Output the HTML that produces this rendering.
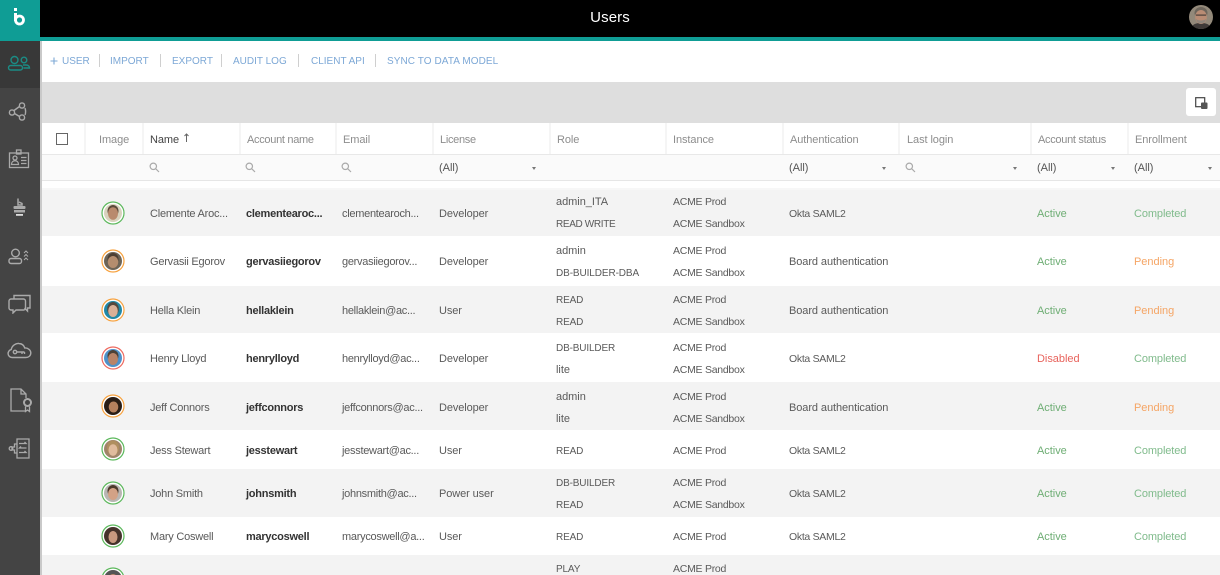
<!DOCTYPE html>
<html><head><meta charset="utf-8"><style>
html,body{margin:0;padding:0;width:1220px;height:575px;overflow:hidden;background:#fff}
body{position:relative;font-family:"Liberation Sans",sans-serif;font-size:11px;color:#5a5a5a;letter-spacing:-.03px}
.a,.t{position:absolute}
.t{white-space:nowrap;line-height:14px;height:14px}
.n{left:150px;letter-spacing:-.22px}
.b{left:246px;font-weight:bold;color:#333;letter-spacing:-.25px}
.e{left:342px;letter-spacing:-.28px}
.l{left:439px;letter-spacing:-.1px}
.k{left:556px;font-size:10px;letter-spacing:-.15px;transform:translateY(1px)}
.w{left:556px}
.i{left:673px;font-size:10.5px;letter-spacing:-.26px}
.u{left:789px;letter-spacing:-.08px}
.q{left:789px;font-size:10.5px;letter-spacing:-.3px}
.g{left:1037px;color:#6fae75}.c{left:1134px;color:#80bb8c;letter-spacing:-.1px}.o{left:1134px;color:#f5a565}.r{left:1037px;color:#e8635c}
.h{color:#8d8d8d;top:133px;letter-spacing:-.08px}
.m{color:#7da8d6;top:55px;font-size:10px;letter-spacing:0}
.s{position:absolute;top:54px;width:1px;height:13px;background:#cfcfcf}
.d{position:absolute;top:123px;width:2px;height:31px;background:#f5f5f5}
.av{position:absolute;left:101px;width:24px;height:24px}
.caret{position:absolute;top:167px;width:0;height:0;border-left:2.5px solid transparent;border-right:2.5px solid transparent;border-top:3px solid #777}
.sv{position:absolute;top:162px}
.f{color:#555;top:161px}
#rows{position:absolute;left:0;top:1px;width:1220px;height:574px}
</style></head><body>
<!-- rows -->
<div class="a" style="left:40px;top:190px;width:1180px;height:46px;background:#f3f3f3"></div>
<div class="a" style="left:40px;top:286px;width:1180px;height:47px;background:#f3f3f3"></div>
<div class="a" style="left:40px;top:382px;width:1180px;height:48px;background:#f3f3f3"></div>
<div class="a" style="left:40px;top:469px;width:1180px;height:48px;background:#f3f3f3"></div>
<div class="a" style="left:40px;top:555px;width:1180px;height:20px;background:#f3f3f3"></div>
<!-- top -->
<div class="a" style="left:0;top:0;width:1220px;height:37px;background:#000"></div>
<div class="a" style="left:0;top:37px;width:1220px;height:4px;background:#0f9d95"></div>
<div class="a" style="left:0;top:0;width:40px;height:41px;background:#0f9d95"></div>
<svg class="a" style="left:12px;top:7px" width="16" height="20" viewBox="0 0 16 20"><rect x="2" y="1" width="3" height="3" fill="#fff"/><path d="M3.500 6v8" stroke="#fff" stroke-width="3"/><circle cx="7.500" cy="13" r="4" fill="none" stroke="#fff" stroke-width="2.800"/></svg>
<div class="t" style="left:0;top:8px;width:1220px;height:20px;line-height:20px;text-align:center;color:#fff;font-size:15px;letter-spacing:.1px">Users</div>
<svg class="a" style="left:1189px;top:5px" width="24" height="24" viewBox="0 0 24 24"><defs><clipPath id="ci"><circle cx="12" cy="12" r="12"/></clipPath></defs><g clip-path="url(#ci)"><rect width="24" height="24" fill="#93897a"/><path d="M2 24c1-5 5-6 10-6s9 1 10 6z" fill="#3f3a38"/><ellipse cx="12" cy="8" rx="6.500" ry="6" fill="#6e665c"/><ellipse cx="12" cy="12" rx="5.800" ry="7" fill="#b98c74"/><path d="M7 14c1 6 9 6 10 0-2 2-8 2-10 0z" fill="#8f867c"/><rect x="7" y="9.500" width="10" height="1.200" fill="#4a403a"/></g></svg>
<!-- sidebar -->
<div class="a" style="left:0;top:41px;width:40px;height:534px;background:#444"></div>
<div class="a" style="left:0;top:41px;width:40px;height:47px;background:#383838"></div>
<div class="a" style="left:40px;top:41px;width:2px;height:534px;background:#c9c9c9"></div>
<svg class="a" style="left:7px;top:55px" width="24" height="18" viewBox="0 0 24 18" fill="none" stroke="#1b8c85" stroke-width="1.400"><circle cx="7.500" cy="5" r="3.500"/><circle cx="17" cy="5" r="2.800"/><rect x="1.500" y="10.500" width="14" height="4.500" rx="2.200"/><path d="M16 10h3c2.500 0 3.500 1.500 3.500 3h-6"/></svg>
<svg class="a" style="left:8px;top:101px" width="20" height="22" viewBox="0 0 20 22" fill="none" stroke="#aaa" stroke-width="1.400"><circle cx="14" cy="4.500" r="2.600"/><circle cx="4" cy="11.500" r="2.600"/><circle cx="14" cy="16.500" r="2.600"/><path d="M11.500 5.500L6 9.500M6.500 12.500l5 3M17 7c.8 2.500.8 5 0 7"/></svg>
<svg class="a" style="left:8px;top:149px" width="22" height="20" viewBox="0 0 22 20" fill="none" stroke="#aaa" stroke-width="1.300"><rect x="1.500" y="4" width="19" height="14.500"/><rect x="8.500" y="1" width="4.500" height="4"/><circle cx="7" cy="9" r="2"/><path d="M3.500 15.500c0-5 7-5 7 0zM13 8.500h5.500M13 11.500h5.500M13 14.500h5.500"/></svg>
<svg class="a" style="left:12px;top:197px" width="15" height="22" viewBox="0 0 15 22"><path d="M6 1.500v6.500h4V6.500L7 5" fill="none" stroke="#aaa" stroke-width="1.500"/><rect x="1.500" y="9" width="12" height="3" rx="1" fill="#aaa"/><rect x="2" y="13" width="11" height="2.500" fill="#aaa"/><rect x="4" y="17" width="7" height="1.800" fill="#ddd"/></svg>
<svg class="a" style="left:8px;top:248px" width="23" height="18" viewBox="0 0 23 18" fill="none" stroke="#aaa" stroke-width="1.400"><circle cx="7.500" cy="5" r="3.800"/><rect x="1" y="10.500" width="12.500" height="5" rx="2"/><path d="M16 5l2-2 2 2M16 8.500l2-2 2 2M16 12l2-2 2 2" stroke-width="1"/></svg>
<svg class="a" style="left:8px;top:293px" width="23" height="21" viewBox="0 0 23 21" fill="none" stroke="#aaa" stroke-width="1.400"><path d="M6 6V2.500h16v12.500h-2.500v3l-3-3"/><path d="M3 6h12.500a2 2 0 0 1 2 2v7a2 2 0 0 1-2 2H8l-3 3v-3H3a2 2 0 0 1-2-2V8a2 2 0 0 1 2-2z"/></svg>
<svg class="a" style="left:7px;top:342px" width="25" height="17" viewBox="0 0 25 17" fill="none" stroke="#aaa" stroke-width="1.400"><path d="M5 15.500a4 4 0 0 1-.8-7.900C5 3.500 9 1 12 1.500c3 .2 5 2 5.800 4.500 3-.2 6 2 6 5s-2.500 4.500-5 4.500z"/><circle cx="8" cy="10" r="1.700"/><path d="M10 10h7.500M15 10v2M17.500 10v2"/></svg>
<svg class="a" style="left:10px;top:388px" width="23" height="25" viewBox="0 0 23 25" fill="none" stroke="#aaa" stroke-width="1.300"><path d="M15 23H1V1h10l5 5v4M11 1v5h5"/><circle cx="17.500" cy="14.500" r="3.500" stroke-width="2"/><path d="M15.500 18.500v5l2-1.500 2 1.500v-5" stroke-width="1.300"/></svg>
<svg class="a" style="left:8px;top:437px" width="22" height="23" viewBox="0 0 22 23" fill="none" stroke="#aaa" stroke-width="1.300"><path d="M9 2h12v19H9zM9 7H6.500v3H4v3h2.500v3H9"/><circle cx="3" cy="11.500" r="1.800"/><path d="M11 6.500h7l-1.500-1.500M18.500 11h-7l1.500-1.500M11 15.500h7L16.500 14"/></svg>
<!-- toolbar -->
<svg class="a" style="left:50px;top:57px" width="8" height="8" viewBox="0 0 8 8"><path d="M4 .5v7M.5 4h7" stroke="#7da8d6" stroke-width="1.100"/></svg>
<div class="t m" style="left:62px">USER</div><div class="s" style="left:99px"></div>
<div class="t m" style="left:110px">IMPORT</div><div class="s" style="left:160px"></div>
<div class="t m" style="left:172px">EXPORT</div><div class="s" style="left:221px"></div>
<div class="t m" style="left:233px">AUDIT LOG</div><div class="s" style="left:298px"></div>
<div class="t m" style="left:311px">CLIENT API</div><div class="s" style="left:375px"></div>
<div class="t m" style="left:387px;letter-spacing:.08px">SYNC TO DATA MODEL</div>
<!-- grey band -->
<div class="a" style="left:42px;top:82px;width:1178px;height:41px;background:#dedede"></div>
<div class="a" style="left:1186px;top:88px;width:30px;height:28px;background:#fff;border-radius:3px"></div>
<svg class="a" style="left:1195px;top:97px" width="13" height="13" viewBox="0 0 13 13"><rect x=".7" y=".7" width="9" height="9" fill="none" stroke="#444" stroke-width="1.200"/><rect x="6" y="5.500" width="6.500" height="6.500" rx="1" fill="#555"/></svg>
<!-- header -->
<div class="a" style="left:42px;top:123px;width:1178px;height:31px;background:#fff"></div>
<div class="a" style="left:42px;top:154px;width:1178px;height:26px;background:#fafafa"></div>
<div class="a" style="left:42px;top:154px;width:1178px;height:1px;background:#e8e8e8"></div>
<div class="a" style="left:42px;top:180px;width:1178px;height:1px;background:#e6e6e6"></div>
<div class="a" style="left:42px;top:188px;width:1178px;height:2px;background:#f7f7f7"></div>
<div class="d" style="left:84px"></div><div class="d" style="left:142px"></div><div class="d" style="left:239px"></div><div class="d" style="left:335px"></div><div class="d" style="left:432px"></div><div class="d" style="left:549px"></div><div class="d" style="left:665px"></div><div class="d" style="left:782px"></div><div class="d" style="left:898px"></div><div class="d" style="left:1030px"></div><div class="d" style="left:1127px"></div>
<div class="a" style="left:56px;top:133px;width:10px;height:10px;border:1.500px solid #666;background:#fff"></div>
<div class="t h" style="left:99px">Image</div>
<div class="t h" style="left:150px;color:#444">Name</div>
<svg class="a" style="left:183px;top:133px" width="7" height="9" viewBox="0 0 7 9"><path d="M3.500 9V1M1.500 3L3.500 1l2 2" fill="none" stroke="#666"/></svg>
<div class="t h" style="left:247px;letter-spacing:-.3px">Account name</div>
<div class="t h" style="left:343px">Email</div>
<div class="t h" style="left:440px;letter-spacing:-.3px">License</div>
<div class="t h" style="left:557px">Role</div>
<div class="t h" style="left:673px">Instance</div>
<div class="t h" style="left:790px">Authentication</div>
<div class="t h" style="left:907px">Last login</div>
<div class="t h" style="left:1038px;letter-spacing:-.3px">Account status</div>
<div class="t h" style="left:1135px">Enrollment</div>
<!-- filters -->
<svg class="sv" style="left:149px" width="11" height="11" viewBox="0 0 11 11" fill="none" stroke="#aaa" stroke-width="1.200"><circle cx="4.300" cy="4.300" r="3.200"/><path d="M6.800 6.800L10 10"/></svg>
<svg class="sv" style="left:245px" width="11" height="11" viewBox="0 0 11 11" fill="none" stroke="#aaa" stroke-width="1.200"><circle cx="4.300" cy="4.300" r="3.200"/><path d="M6.800 6.800L10 10"/></svg>
<svg class="sv" style="left:341px" width="11" height="11" viewBox="0 0 11 11" fill="none" stroke="#aaa" stroke-width="1.200"><circle cx="4.300" cy="4.300" r="3.200"/><path d="M6.800 6.800L10 10"/></svg>
<svg class="sv" style="left:905px" width="11" height="11" viewBox="0 0 11 11" fill="none" stroke="#aaa" stroke-width="1.200"><circle cx="4.300" cy="4.300" r="3.200"/><path d="M6.800 6.800L10 10"/></svg>
<div class="t f" style="left:439px">(All)</div><div class="caret" style="left:532px"></div>
<div class="t f" style="left:789px">(All)</div><div class="caret" style="left:882px"></div>
<div class="caret" style="left:1013px"></div>
<div class="t f" style="left:1037px">(All)</div><div class="caret" style="left:1111px"></div>
<div class="t f" style="left:1134px">(All)</div><div class="caret" style="left:1208px"></div>
<!-- avatars -->
<svg class="av" style="top:201px" viewBox="0 0 24 24"><circle cx="12" cy="12" r="11" fill="#fff" stroke="#5cb85c" stroke-width="1.200"/><circle cx="12" cy="12" r="9" fill="#d8d2bd"/><ellipse cx="12" cy="10" rx="5.500" ry="6" fill="#5a4a3a"/><ellipse cx="12" cy="12.500" rx="5" ry="6.300" fill="#b98a6d"/></svg>
<svg class="av" style="top:249px" viewBox="0 0 24 24"><circle cx="12" cy="12" r="11" fill="#fff" stroke="#f7a23f" stroke-width="1.200"/><circle cx="12" cy="12" r="9" fill="#6d6456"/><ellipse cx="12" cy="10" rx="5.500" ry="6" fill="#4c3f33"/><ellipse cx="12" cy="13" rx="5.200" ry="6" fill="#b48d6e"/></svg>
<svg class="av" style="top:298px" viewBox="0 0 24 24"><circle cx="12" cy="12" r="11" fill="#fff" stroke="#f7a23f" stroke-width="1.200"/><circle cx="12" cy="12" r="9" fill="#2088a6"/><ellipse cx="12" cy="11" rx="5.800" ry="7" fill="#55483d"/><ellipse cx="12" cy="13" rx="4.800" ry="6" fill="#d9b097"/></svg>
<svg class="av" style="top:346px" viewBox="0 0 24 24"><circle cx="12" cy="12" r="11" fill="#fff" stroke="#ee6a60" stroke-width="1.200"/><circle cx="12" cy="12" r="9" fill="#4f91c9"/><ellipse cx="12" cy="10" rx="5.500" ry="6" fill="#4d4238"/><ellipse cx="12" cy="13" rx="5" ry="6" fill="#b98468"/></svg>
<svg class="av" style="top:394px" viewBox="0 0 24 24"><circle cx="12" cy="12" r="11" fill="#fff" stroke="#f7a23f" stroke-width="1.200"/><circle cx="12" cy="12" r="9" fill="#2a1d15"/><ellipse cx="12.500" cy="13" rx="4.800" ry="5.500" fill="#b5805d"/></svg>
<svg class="av" style="top:437px" viewBox="0 0 24 24"><circle cx="12" cy="12" r="11" fill="#fff" stroke="#5cb85c" stroke-width="1.200"/><circle cx="12" cy="12" r="9" fill="#a0846a"/><ellipse cx="12" cy="11" rx="6" ry="7.500" fill="#b08f5f"/><ellipse cx="12" cy="13" rx="4.500" ry="5.800" fill="#e0bb9d"/></svg>
<svg class="av" style="top:481px" viewBox="0 0 24 24"><circle cx="12" cy="12" r="11" fill="#fff" stroke="#5cb85c" stroke-width="1.200"/><circle cx="12" cy="12" r="9" fill="#b8b6b2"/><ellipse cx="12" cy="10" rx="5.500" ry="6" fill="#4c3a2c"/><ellipse cx="12" cy="13" rx="5" ry="6" fill="#d3a286"/></svg>
<svg class="av" style="top:524px" viewBox="0 0 24 24"><circle cx="12" cy="12" r="11" fill="#fff" stroke="#5cb85c" stroke-width="1.200"/><circle cx="12" cy="12" r="9" fill="#45332b"/><ellipse cx="12" cy="13" rx="4.500" ry="6" fill="#c99a80"/></svg>
<svg class="av" style="top:567px" viewBox="0 0 24 24"><circle cx="12" cy="12" r="11" fill="#fff" stroke="#5cb85c" stroke-width="1.200"/><circle cx="12" cy="12" r="9" fill="#555"/><ellipse cx="12" cy="13" rx="5" ry="6" fill="#b98a6d"/></svg>
<div id="rows">
<!-- row 1 -->
<div class="t n" style="top:206px">Clemente Aroc...</div><div class="t b" style="top:206px">clementearoc...</div><div class="t e" style="top:206px">clementearoch...</div><div class="t l" style="top:206px">Developer</div>
<div class="t w" style="top:194px">admin_ITA</div><div class="t k" style="top:216px;letter-spacing:-.35px">READ WRITE</div><div class="t i" style="top:194px">ACME Prod</div><div class="t i" style="top:216px">ACME Sandbox</div>
<div class="t q" style="top:206px">Okta SAML2</div><div class="t g" style="top:206px">Active</div><div class="t c" style="top:206px">Completed</div>
<!-- row 2 -->
<div class="t n" style="top:254px">Gervasii Egorov</div><div class="t b" style="top:254px">gervasiiegorov</div><div class="t e" style="top:254px">gervasiiegorov...</div><div class="t l" style="top:254px">Developer</div>
<div class="t w" style="top:243px">admin</div><div class="t k" style="top:265px;letter-spacing:-.1px">DB-BUILDER-DBA</div><div class="t i" style="top:243px">ACME Prod</div><div class="t i" style="top:265px">ACME Sandbox</div>
<div class="t u" style="top:254px">Board authentication</div><div class="t g" style="top:254px">Active</div><div class="t o" style="top:254px">Pending</div>
<!-- row 3 -->
<div class="t n" style="top:303px">Hella Klein</div><div class="t b" style="top:303px">hellaklein</div><div class="t e" style="top:303px">hellaklein@ac...</div><div class="t l" style="top:303px">User</div>
<div class="t k" style="top:292px">READ</div><div class="t k" style="top:314px">READ</div><div class="t i" style="top:292px">ACME Prod</div><div class="t i" style="top:314px">ACME Sandbox</div>
<div class="t u" style="top:303px">Board authentication</div><div class="t g" style="top:303px">Active</div><div class="t o" style="top:303px">Pending</div>
<!-- row 4 -->
<div class="t n" style="top:351px">Henry Lloyd</div><div class="t b" style="top:351px">henrylloyd</div><div class="t e" style="top:351px">henrylloyd@ac...</div><div class="t l" style="top:351px">Developer</div>
<div class="t k" style="top:340px">DB-BUILDER</div><div class="t w" style="top:362px">lite</div><div class="t i" style="top:340px">ACME Prod</div><div class="t i" style="top:362px">ACME Sandbox</div>
<div class="t q" style="top:351px">Okta SAML2</div><div class="t r" style="top:351px">Disabled</div><div class="t c" style="top:351px">Completed</div>
<!-- row 5 -->
<div class="t n" style="top:400px">Jeff Connors</div><div class="t b" style="top:400px">jeffconnors</div><div class="t e" style="top:400px">jeffconnors@ac...</div><div class="t l" style="top:400px">Developer</div>
<div class="t w" style="top:389px">admin</div><div class="t w" style="top:411px">lite</div><div class="t i" style="top:389px">ACME Prod</div><div class="t i" style="top:411px">ACME Sandbox</div>
<div class="t u" style="top:400px">Board authentication</div><div class="t g" style="top:400px">Active</div><div class="t o" style="top:400px">Pending</div>
<!-- row 6 -->
<div class="t n" style="top:443px">Jess Stewart</div><div class="t b" style="top:443px">jesstewart</div><div class="t e" style="top:443px">jesstewart@ac...</div><div class="t l" style="top:443px">User</div>
<div class="t k" style="top:443px">READ</div><div class="t i" style="top:443px">ACME Prod</div>
<div class="t q" style="top:443px">Okta SAML2</div><div class="t g" style="top:443px">Active</div><div class="t c" style="top:443px">Completed</div>
<!-- row 7 -->
<div class="t n" style="top:486px">John Smith</div><div class="t b" style="top:486px">johnsmith</div><div class="t e" style="top:486px">johnsmith@ac...</div><div class="t l" style="top:486px">Power user</div>
<div class="t k" style="top:475px">DB-BUILDER</div><div class="t k" style="top:497px">READ</div><div class="t i" style="top:475px">ACME Prod</div><div class="t i" style="top:497px">ACME Sandbox</div>
<div class="t q" style="top:486px">Okta SAML2</div><div class="t g" style="top:486px">Active</div><div class="t c" style="top:486px">Completed</div>
<!-- row 8 -->
<div class="t n" style="top:529px">Mary Coswell</div><div class="t b" style="top:529px">marycoswell</div><div class="t e" style="top:529px">marycoswell@a...</div><div class="t l" style="top:529px">User</div>
<div class="t k" style="top:529px">READ</div><div class="t i" style="top:529px">ACME Prod</div>
<div class="t q" style="top:529px">Okta SAML2</div><div class="t g" style="top:529px">Active</div><div class="t c" style="top:529px">Completed</div>
<!-- row 9 -->
<div class="t k" style="top:561px">PLAY</div><div class="t i" style="top:561px">ACME Prod</div>
</div>
</body></html>
